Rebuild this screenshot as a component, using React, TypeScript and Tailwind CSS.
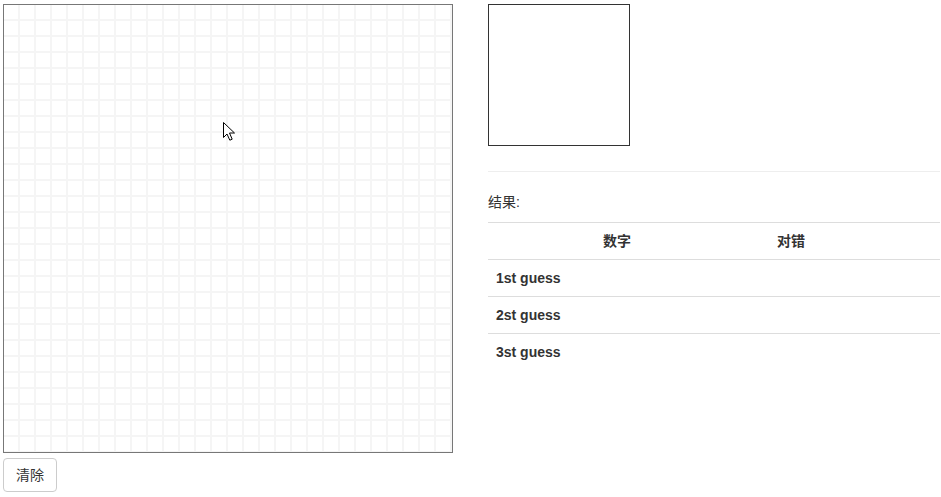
import React from "react";

/**
 * Digit guess page: a drawing canvas on the left, a preview box and the
 * results table on the right.
 */

const ROWS = ["1st guess", "2st guess", "3st guess"];

function Cursor(): React.ReactElement {
  return (
    <svg
      className="absolute left-[218px] top-[116px]"
      width="14"
      height="21"
      viewBox="0 0 14 21"
    >
      <path
        d="M1.5 1.5 L1.5 16.5 L5 13 L7.8 19.2 L10.2 18.2 L7.5 12 L12.5 12 Z"
        fill="#fff"
        stroke="#000"
        strokeWidth="1"
        strokeLinejoin="miter"
      />
    </svg>
  );
}

function DrawPad(): React.ReactElement {
  return (
    <div className="flex flex-col items-start gap-[5px]">
      <div className="relative w-[450px] h-[449px] border border-[#777] bg-white bg-[linear-gradient(to_right,transparent_14px,#f5f5f5_14px),linear-gradient(to_bottom,transparent_14px,#f5f5f5_14px)] bg-[size:16px_16px]">
        <Cursor />
      </div>
      <button className="h-[34px] px-3 border border-[#ccc] rounded-[4px] bg-white text-[14px] text-[#333]">
        清除
      </button>
    </div>
  );
}

function ResultPanel(): React.ReactElement {
  return (
    <div className="flex-1 flex flex-col">
      <div className="w-[142px] h-[142px] border border-[#333]" />
      <div className="mt-[25px] border-t border-[#eee]" />
      <p className="mt-[20px] mb-[10px] leading-5 text-[14px]">结果:</p>
      <table className="w-full text-[14px] border-collapse">
        <thead>
          <tr className="border-t border-b border-[#ddd]">
            <th className="w-[104px] p-2 leading-5" />
            <th className="w-[50px] p-2 leading-5 text-center font-bold">数字</th>
            <th className="p-2 leading-5 text-center font-bold">对错</th>
          </tr>
        </thead>
        <tbody>
          {ROWS.map((label, i) => (
            <tr key={label} className={i > 0 ? "border-t border-[#ddd]" : ""}>
              <th className="p-2 leading-5 text-left font-bold whitespace-nowrap">{label}</th>
              <td className="p-2 leading-5" />
              <td className="p-2 leading-5" />
            </tr>
          ))}
        </tbody>
      </table>
    </div>
  );
}

export default function App(): React.ReactElement {
  return (
    <div className="min-h-screen bg-white text-[#333] font-['Liberation_Sans','Noto_Sans_CJK_SC',sans-serif]">
      <div className="flex items-start gap-[35px] pl-[3px] pt-[4px] pr-[1px]">
        <DrawPad />
        <ResultPanel />
      </div>
    </div>
  );
}
